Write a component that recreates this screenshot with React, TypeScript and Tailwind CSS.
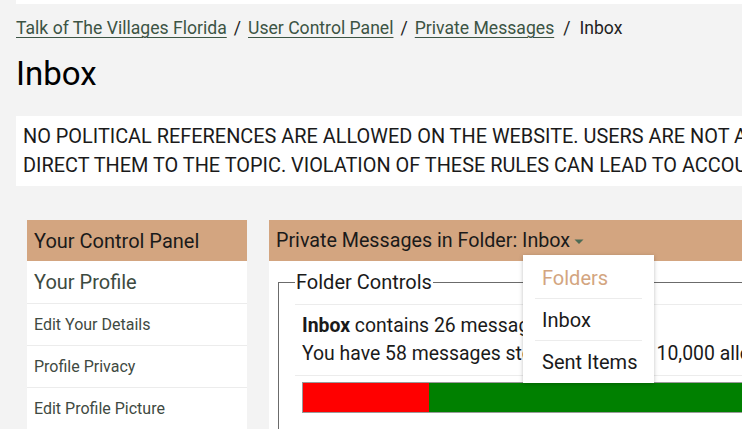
import React from 'react';

const font = "font-['Roboto','Liberation_Sans',sans-serif]";

const Crumb: React.FC<{ label: string }> = ({ label }) => (
  <a href="#" className="text-[#3c5444] underline underline-offset-[3px] decoration-1">
    {label}
  </a>
);

const sideLinks = ['Edit Your Details', 'Profile Privacy', 'Edit Profile Picture'];

export default function App() {
  return (
    <div className={`w-[742px] h-[429px] overflow-hidden bg-[#f3f3f3] ${font}`}>
      <div className="w-[1100px] pl-4">
        {/* top strip */}
        <div className="h-1 bg-white" />

        {/* Breadcrumb */}
        <nav className="mt-3 flex items-center text-[17.6px] leading-6 text-[#222]">
          <Crumb label="Talk of The Villages Florida" />
          <span className="mx-[7px]">/</span>
          <Crumb label="User Control Panel" />
          <span className="mx-[7px]">/</span>
          <Crumb label="Private Messages" />
          <span className="mx-[9px]">/</span>
          <span>Inbox</span>
        </nav>

        <h1 className="mt-[14px] text-[33px] leading-10 text-black">Inbox</h1>

        {/* Notice */}
        <div className="mt-[22px] bg-white px-[7px] py-[6px] text-[19.9px] leading-[29px] text-[#1a1a1a] whitespace-nowrap">
          <div>NO POLITICAL REFERENCES ARE ALLOWED ON THE WEBSITE. USERS ARE NOT ALLOWED TO POST POLITICAL CONTENT OR</div>
          <div>DIRECT THEM TO THE TOPIC. VIOLATION OF THESE RULES CAN LEAD TO ACCOUNT SUSPENSION.</div>
        </div>

        <div className="mt-[34px] ml-[11px] flex gap-[22px] items-start">
          {/* Sidebar */}
          <aside className="w-[220px] shrink-0 bg-white">
            <div className="h-[41px] bg-[#d3a580] px-[7px] flex items-center text-[20px] text-[#1a1a1a]">
              Your Control Panel
            </div>
            <div className="h-[43px] border-b border-[#ececec] px-[7px] flex items-center text-[20px] text-[#3d4a40]">
              Your Profile
            </div>
            {sideLinks.map((l) => (
              <div
                key={l}
                className="h-[42px] border-b border-[#ececec] px-[7px] flex items-center text-[16px] text-[#3f4a42]"
              >
                {l}
              </div>
            ))}
          </aside>

          {/* Main panel */}
          <section className="relative flex-1 bg-white h-[300px]">
            <div className="h-[41px] bg-[#d3a580] px-[7px] flex items-center text-[19.7px] text-[#1a1a1a]">
              Private Messages in Folder: Inbox
              <svg width="10" height="6" viewBox="0 0 10 6" className="ml-[4px] mt-[3px]">
                <path d="M0.5 0.5 L9.5 0.5 L5 5 Z" fill="#4d6b55" />
              </svg>
            </div>

            <fieldset className="ml-[9px] mt-[9px] border border-[#6b6b6b] pl-[16px] pr-0 pb-10">
              <legend className="px-[1px] text-[20px] leading-6 text-[#1a1a1a]">Folder Controls</legend>
              <div className="mt-[10px] border-t border-b border-[#ececec] px-[7px] py-[7px] text-[19.4px] leading-[28px] text-[#1a1a1a] whitespace-nowrap">
                <div>
                  <b>Inbox</b> contains 26 messages
                </div>
                <div>You have 58 messages stored, out of the 10,000 allowed.</div>
              </div>
              <div className="ml-[7px] mt-[6px] h-[31px] border border-[#9a9a9a] flex">
                <div className="w-[126px] bg-[#ff0000]" />
                <div className="flex-1 bg-[#008000]" />
              </div>
            </fieldset>

            {/* Folder dropdown */}
            <div className="absolute left-[254px] top-[35px] w-[131px] pt-[2px] bg-white shadow-[0_1px_4px_rgba(0,0,0,0.25)] text-[20px]">
              <div className="mx-3 h-[42px] border-b border-[#ececec] flex items-center text-[#d3a580]">
                <span className="pl-[7px]">Folders</span>
              </div>
              <div className="mx-3 h-[42px] border-b border-[#ececec] flex items-center text-[#1a1a1a]">
                <span className="pl-[7px]">Inbox</span>
              </div>
              <div className="mx-3 h-[42px] flex items-center text-[#1a1a1a]">
                <span className="pl-[7px]">Sent Items</span>
              </div>
            </div>
          </section>
        </div>
      </div>
    </div>
  );
}
